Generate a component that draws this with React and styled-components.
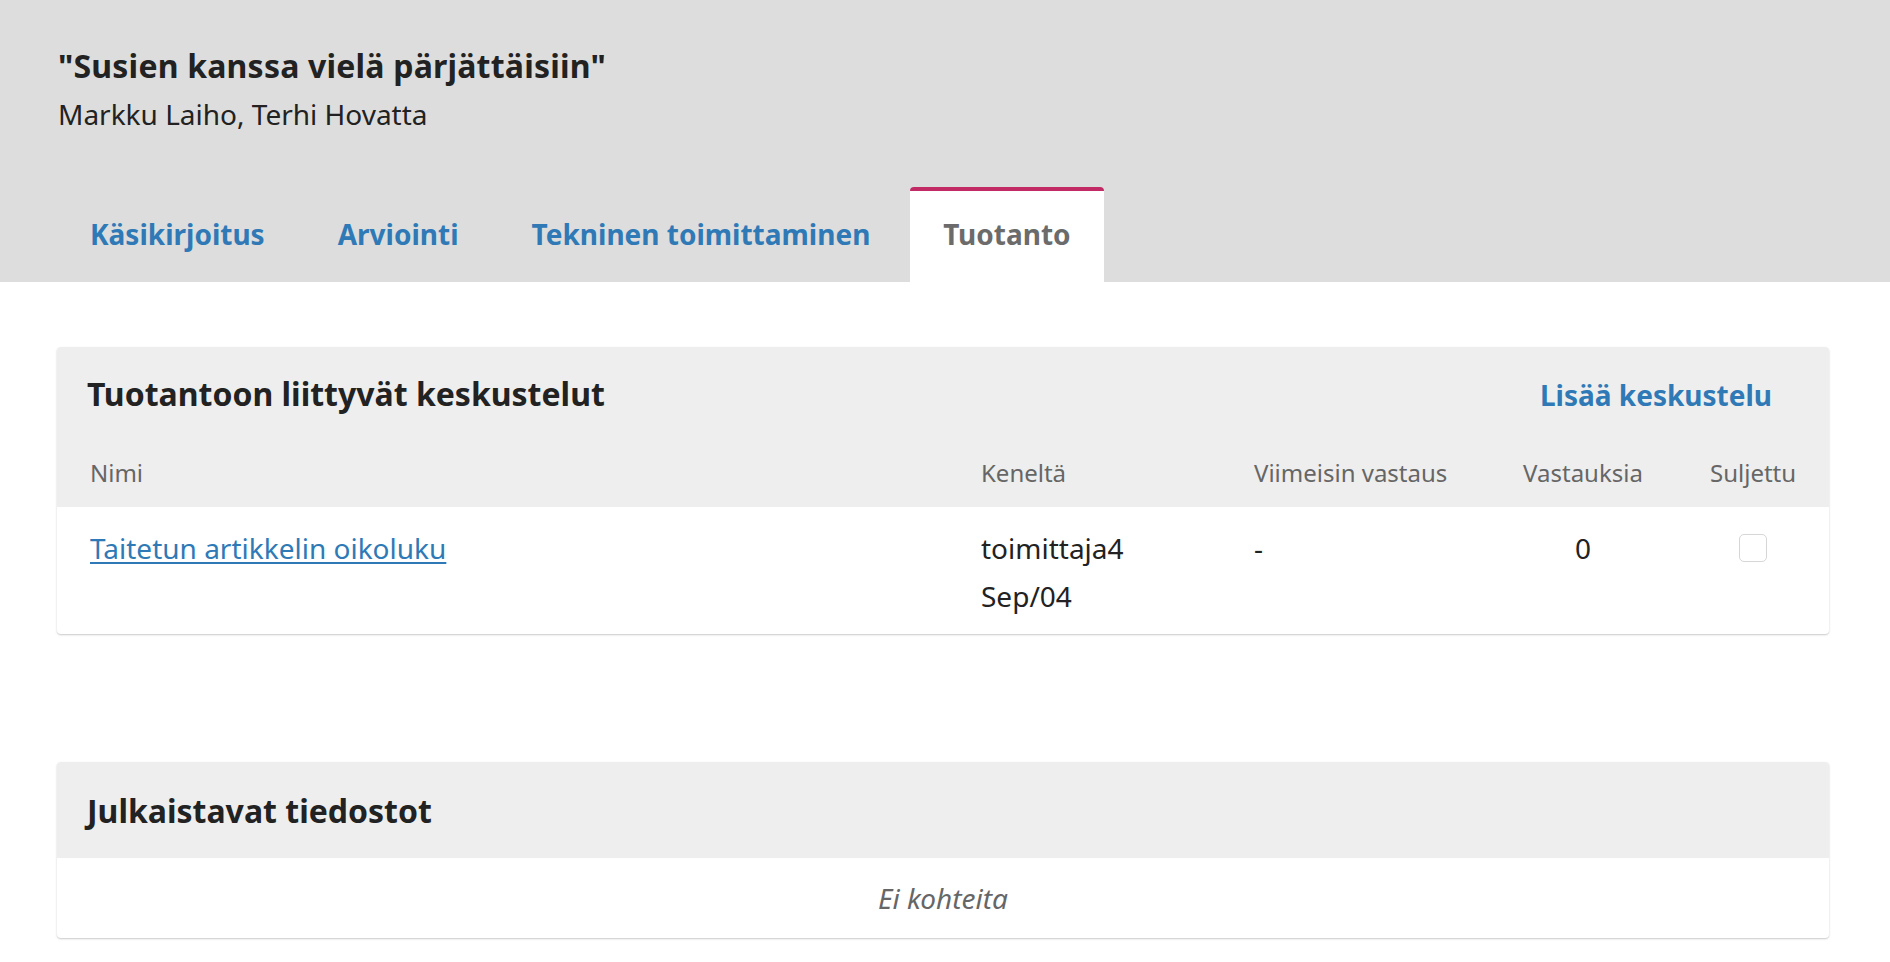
import React from "react";
import styled, { createGlobalStyle } from "styled-components";

const GlobalStyle = createGlobalStyle`
  html, body {
    margin: 0;
    padding: 0;
    background: #fff;
    font-family: "Noto Sans", "Open Sans", sans-serif;
    color: #222;
  }
`;

const tabs = ["Käsikirjoitus", "Arviointi", "Tekninen toimittaminen", "Tuotanto"];

export default function App() {
  return (
    <>
      <GlobalStyle />
      <Header>
        <Title>"Susien kanssa vielä pärjättäisiin"</Title>
        <Authors>Markku Laiho, Terhi Hovatta</Authors>
        <Tabs>
          {tabs.map((t) => (
            <Tab key={t} $active={t === "Tuotanto"}>
              {t}
            </Tab>
          ))}
        </Tabs>
      </Header>

      <Main>
        <Panel>
          <PanelHead>
            <HeadRow>
              <PanelTitle>Tuotantoon liittyvät keskustelut</PanelTitle>
              <HeadAction href="#">Lisää keskustelu</HeadAction>
            </HeadRow>
            <Grid $head>
              <Cell>Nimi</Cell>
              <Cell>Keneltä</Cell>
              <Cell>Viimeisin vastaus</Cell>
              <Cell $center>Vastauksia</Cell>
              <Cell $center>Suljettu</Cell>
            </Grid>
          </PanelHead>
          <Grid>
            <Cell>
              <RowLink href="#">Taitetun artikkelin oikoluku</RowLink>
            </Cell>
            <Cell>
              toimittaja4
              <br />
              Sep/04
            </Cell>
            <Cell>-</Cell>
            <Cell $center>0</Cell>
            <Cell $center>
              <Check type="checkbox" />
            </Cell>
          </Grid>
        </Panel>

        <Panel>
          <PanelHead>
            <HeadRow $short>
              <PanelTitle>Julkaistavat tiedostot</PanelTitle>
            </HeadRow>
          </PanelHead>
          <Empty>Ei kohteita</Empty>
        </Panel>
      </Main>
    </>
  );
}

const Header = styled.header`
  background: #ddd;
  padding: 46px 0 0 58px;
  display: flex;
  flex-direction: column;
`;

const Title = styled.h1`
  margin: 0;
  font-size: 32px;
  line-height: 40px;
  font-weight: 700;
  letter-spacing: 0.2px;
  color: #222;
`;

const Authors = styled.div`
  font-size: 28px;
  line-height: 36px;
  margin-top: 10px;
  color: #222;
`;

const Tabs = styled.nav`
  display: flex;
  gap: 7px;
  margin-top: 55px;
  margin-left: -1px;
`;

const Tab = styled.a`
  display: block;
  height: 95px;
  box-sizing: border-box;
  padding: 0 33px;
  border-top: 4px solid ${(p) => (p.$active ? "#c22a66" : "transparent")};
  border-radius: 4px 4px 0 0;
  background: ${(p) => (p.$active ? "#fff" : "transparent")};
  color: ${(p) => (p.$active ? "#6b6b6b" : "#2f7ab6")};
  font-size: 28px;
  font-weight: 700;
  line-height: 87px;
  cursor: pointer;
`;

const Main = styled.main`
  padding: 65px 61px 24px 57px;
  display: flex;
  flex-direction: column;
  gap: 128px;
`;

const Panel = styled.section`
  background: #fff;
  border-radius: 4px;
  box-shadow: 0 1px 2px rgba(0, 0, 0, 0.22);
  overflow: hidden;
`;

const PanelHead = styled.div`
  background: #eee;
`;

const HeadRow = styled.div`
  display: flex;
  align-items: center;
  justify-content: space-between;
  height: ${(p) => (p.$short ? "96px" : "92px")};
  padding: 0 57px 0 30px;
`;

const PanelTitle = styled.h2`
  margin: 0;
  font-size: 32px;
  font-weight: 700;
  color: #222;
`;

const HeadAction = styled.a`
  font-size: 28px;
  font-weight: 700;
  color: #2f7ab6;
  text-decoration: none;
  margin-top: 3px;
`;

const Grid = styled.div`
  display: grid;
  grid-template-columns: minmax(0, 1fr) 273px 202px 254px 85px;
  align-items: ${(p) => (p.$head ? "center" : "start")};
  height: ${(p) => (p.$head ? "68px" : "auto")};
  padding: ${(p) => (p.$head ? "0 34px 0 33px" : "17px 34px 14px 33px")};
  font-size: ${(p) => (p.$head ? "24px" : "28px")};
  line-height: ${(p) => (p.$head ? "32px" : "48px")};
  color: ${(p) => (p.$head ? "#666" : "#222")};
`;

const Cell = styled.div`
  text-align: ${(p) => (p.$center ? "center" : "left")};
  white-space: nowrap;
`;

const RowLink = styled.a`
  color: #2f7ab6;
  text-decoration: underline;
  text-underline-offset: 3px;
`;

const Check = styled.input`
  appearance: none;
  width: 28px;
  height: 28px;
  margin: 10px 0 0;
  border: 1px solid #d6d6d6;
  border-radius: 5px;
  background: #fff;
  vertical-align: top;
`;

const Empty = styled.div`
  height: 80px;
  display: flex;
  align-items: center;
  justify-content: center;
  font-size: 28px;
  font-style: italic;
  color: #666;
`;
